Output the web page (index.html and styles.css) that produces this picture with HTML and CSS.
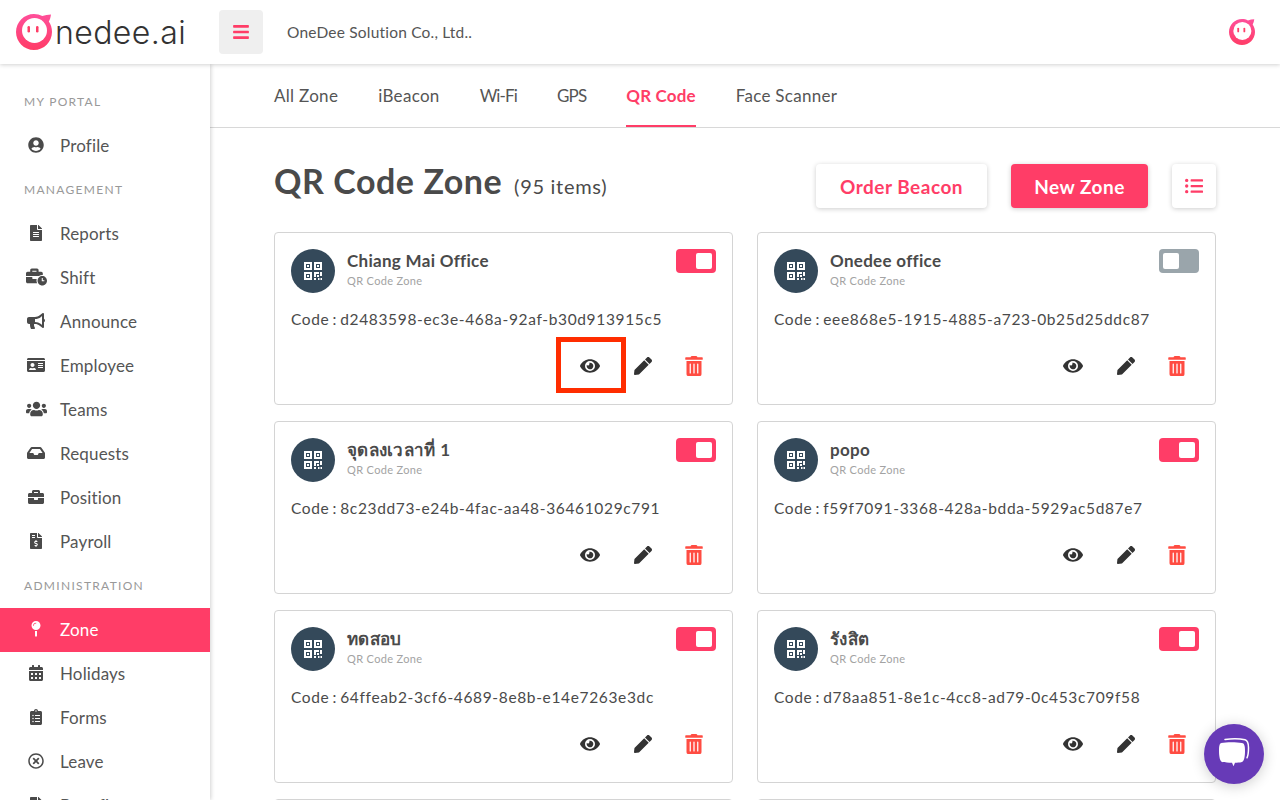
FILE: index.html
```html
<!DOCTYPE html>
<html lang="en">
<head>
    <meta charset="UTF-8">
    <meta name="viewport" content="width=device-width, initial-scale=1.0">
    <title>QR Code Zone - Onedee</title>
    <link rel="stylesheet" href="styles.css">
</head>
<body>
    <svg class="sprite" xmlns="http://www.w3.org/2000/svg">
        <defs>
            <linearGradient id="logo-grad" x1="0" y1="0" x2="0" y2="1">
                <stop offset="0" stop-color="#ff4f9a"/>
                <stop offset="1" stop-color="#ff3d67"/>
            </linearGradient>
        </defs>
        <symbol id="i-bars" viewBox="0 0 448 512"><path d="M16 132h416c8.837 0 16-7.163 16-16V76c0-8.837-7.163-16-16-16H16C7.163 60 0 67.163 0 76v40c0 8.837 7.163 16 16 16zm0 160h416c8.837 0 16-7.163 16-16v-40c0-8.837-7.163-16-16-16H16c-8.837 0-16 7.163-16 16v40c0 8.837 7.163 16 16 16zm0 160h416c8.837 0 16-7.163 16-16v-40c0-8.837-7.163-16-16-16H16c-8.837 0-16 7.163-16 16v40c0 8.837 7.163 16 16 16z"/></symbol>
        <symbol id="i-eye" viewBox="0 0 576 512"><path d="M572.52 241.4C518.29 135.59 410.93 64 288 64S57.68 135.64 3.48 241.41a32.35 32.35 0 0 0 0 29.19C57.71 376.41 165.07 448 288 448s230.32-71.64 284.52-177.41a32.35 32.35 0 0 0 0-29.19zM288 400a144 144 0 1 1 144-144 143.93 143.93 0 0 1-144 144zm0-240a95.31 95.31 0 0 0-25.31 3.79 47.85 47.85 0 0 1-66.9 66.9A95.78 95.78 0 1 0 288 160z"/></symbol>
        <symbol id="i-pen" viewBox="0 0 512 512"><path d="M290.74 93.24l128.02 128.02-277.99 277.99-114.14 12.6C11.35 513.54-1.56 500.62.14 485.34l12.7-114.22 277.9-277.88zm207.2-19.06l-60.11-60.11c-18.75-18.75-49.16-18.75-67.91 0l-56.55 56.55 128.02 128.02 56.55-56.55c18.75-18.76 18.75-49.16 0-67.91z"/></symbol>
        <symbol id="i-trash" viewBox="0 0 448 512"><path d="M32 464a48 48 0 0 0 48 48h288a48 48 0 0 0 48-48V128H32zm272-256a16 16 0 0 1 32 0v224a16 16 0 0 1-32 0zm-96 0a16 16 0 0 1 32 0v224a16 16 0 0 1-32 0zm-96 0a16 16 0 0 1 32 0v224a16 16 0 0 1-32 0zM432 32H312l-9.4-18.7A24 24 0 0 0 281.1 0H166.8a23.72 23.72 0 0 0-21.4 13.3L136 32H16A16 16 0 0 0 0 48v32a16 16 0 0 0 16 16h416a16 16 0 0 0 16-16V48a16 16 0 0 0-16-16z"/></symbol>
        <symbol id="i-user" viewBox="0 0 496 512"><path d="M248 8C111 8 0 119 0 256s111 248 248 248 248-111 248-248S385 8 248 8zm0 96c48.6 0 88 39.4 88 88s-39.4 88-88 88-88-39.4-88-88 39.4-88 88-88zm0 344c-58.7 0-111.3-26.6-146.5-68.2 18.8-35.4 55.6-59.8 98.5-59.8 2.4 0 4.8.4 7.1 1.1 13 4.2 26.6 6.9 40.9 6.9 14.3 0 28-2.7 40.9-6.9 2.3-.7 4.7-1.1 7.1-1.1 42.9 0 79.7 24.4 98.5 59.8C359.3 421.4 306.7 448 248 448z"/></symbol>
        <symbol id="i-file" viewBox="0 0 384 512"><path d="M224 136V0H24C10.7 0 0 10.7 0 24v464c0 13.3 10.7 24 24 24h336c13.3 0 24-10.7 24-24V160H248c-13.2 0-24-10.8-24-24zm64 236c0 6.6-5.4 12-12 12H108c-6.6 0-12-5.4-12-12v-8c0-6.6 5.4-12 12-12h168c6.6 0 12 5.4 12 12v8zm0-64c0 6.6-5.4 12-12 12H108c-6.6 0-12-5.4-12-12v-8c0-6.6 5.4-12 12-12h168c6.6 0 12 5.4 12 12v8zm0-72v8c0 6.6-5.4 12-12 12H108c-6.6 0-12-5.4-12-12v-8c0-6.6 5.4-12 12-12h168c6.6 0 12 5.4 12 12zm96-114.1v6.1H256V0h6.1c6.4 0 12.5 2.5 17 7l97.9 98c4.5 4.5 7 10.6 7 16.9z"/></symbol>
        <symbol id="i-list" viewBox="0 0 512 512"><path d="M48 48a48 48 0 1 0 48 48 48 48 0 0 0-48-48zm0 160a48 48 0 1 0 48 48 48 48 0 0 0-48-48zm0 160a48 48 0 1 0 48 48 48 48 0 0 0-48-48zm448 16H176a16 16 0 0 0-16 16v32a16 16 0 0 0 16 16h320a16 16 0 0 0 16-16v-32a16 16 0 0 0-16-16zm0-320H176a16 16 0 0 0-16 16v32a16 16 0 0 0 16 16h320a16 16 0 0 0 16-16V80a16 16 0 0 0-16-16zm0 160H176a16 16 0 0 0-16 16v32a16 16 0 0 0 16 16h320a16 16 0 0 0 16-16v-32a16 16 0 0 0-16-16z"/></symbol>
        <symbol id="i-time" viewBox="0 0 640 512"><path d="M496 224c-79.59 0-144 64.41-144 144s64.41 144 144 144 144-64.41 144-144-64.41-144-144-144zm64 150.29c0 5.34-4.37 9.71-9.71 9.71h-60.57c-5.34 0-9.71-4.37-9.71-9.71v-76.57c0-5.34 4.37-9.71 9.71-9.71h12.57c5.34 0 9.71 4.37 9.71 9.71V352h38.29c5.34 0 9.71 4.37 9.71 9.71v12.58zM496 192c5.4 0 10.72.33 16 .81V144c0-25.6-22.4-48-48-48h-80V48c0-25.6-22.4-48-48-48H176c-25.6 0-48 22.4-48 48v48H48c-25.6 0-48 22.4-48 48v80h395.12c28.6-20.09 63.35-32 100.88-32zM320 96H192V64h128v32zm6.82 224H208c-8.84 0-16-7.16-16-16v-48H0v144c0 25.6 22.4 48 48 48h291.43C327.1 423.96 320 396.82 320 368c0-16.66 2.48-32.72 6.82-48z"/></symbol>
        <symbol id="i-horn" viewBox="0 0 576 512"><path d="M576 240c0-23.63-12.95-44.04-32-55.12V32.01C544 23.26 537.02 0 512 0c-7.12 0-14.19 2.38-19.98 7.02l-85.03 68.03C364.28 109.19 310.66 128 256 128H64c-35.35 0-64 28.65-64 64v96c0 35.35 28.65 64 64 64h33.7c-1.39 10.48-2.18 21.14-2.18 32 0 39.77 9.26 77.35 25.56 110.94 5.19 10.69 16.52 17.06 28.4 17.06h74.28c26.05 0 41.69-29.84 25.9-50.56-16.4-21.52-26.15-48.36-26.15-77.44 0-11.11 1.62-21.79 4.41-32H256c54.66 0 108.28 18.81 150.98 52.95l85.03 68.03a32.023 32.023 0 0 0 19.98 7.02c24.92 0 32-22.78 32-32V295.13C563.05 284.04 576 263.63 576 240zm-96 141.42l-33.05-26.44C392.95 311.78 325.12 288 256 288v-96c69.12 0 136.95-23.78 190.95-66.98L480 98.58v282.84z"/></symbol>
        <symbol id="i-card" viewBox="0 0 576 512"><path d="M528 32H48C21.5 32 0 53.5 0 80v16h576V80c0-26.5-21.5-48-48-48zM0 432c0 26.5 21.5 48 48 48h480c26.5 0 48-21.5 48-48V128H0v304zm352-232c0-4.4 3.6-8 8-8h144c4.4 0 8 3.6 8 8v16c0 4.4-3.6 8-8 8H360c-4.4 0-8-3.6-8-8v-16zm0 64c0-4.4 3.6-8 8-8h144c4.4 0 8 3.6 8 8v16c0 4.4-3.6 8-8 8H360c-4.4 0-8-3.6-8-8v-16zm0 64c0-4.4 3.6-8 8-8h144c4.4 0 8 3.6 8 8v16c0 4.4-3.6 8-8 8H360c-4.4 0-8-3.6-8-8v-16zM176 192c35.3 0 64 28.7 64 64s-28.7 64-64 64-64-28.7-64-64 28.7-64 64-64zM67.1 396.2C75.5 370.5 99.6 352 128 352h8.2c12.3 5.1 25.7 8 39.8 8s27.6-2.9 39.8-8h8.2c28.4 0 52.5 18.5 60.9 44.2 3.2 9.9-5.2 19.8-15.6 19.8H82.7c-10.4 0-18.8-10-15.6-19.8z"/></symbol>
        <symbol id="i-users" viewBox="0 0 640 512"><path d="M96 224c35.3 0 64-28.7 64-64s-28.7-64-64-64-64 28.7-64 64 28.7 64 64 64zm448 0c35.3 0 64-28.7 64-64s-28.7-64-64-64-64 28.7-64 64 28.7 64 64 64zm32 32h-64c-17.6 0-33.5 7.1-45.1 18.6 40.3 22.1 68.9 62 75.1 109.4h66c17.7 0 32-14.3 32-32v-32c0-35.3-28.7-64-64-64zm-256 0c61.9 0 112-50.1 112-112S381.9 32 320 32 208 82.1 208 144s50.1 112 112 112zm76.8 32h-8.3c-20.8 10-43.9 16-68.5 16s-47.6-6-68.5-16h-8.3C179.6 288 128 339.6 128 403.2V432c0 26.5 21.5 48 48 48h288c26.5 0 48-21.5 48-48v-28.8c0-63.6-51.6-115.2-115.2-115.2zm-223.7-13.4C161.5 263.1 145.6 256 128 256H64c-35.3 0-64 28.7-64 64v32c0 17.7 14.3 32 32 32h65.9c6.3-47.4 34.9-87.3 75.2-109.4z"/></symbol>
        <symbol id="i-inbox" viewBox="0 0 576 512"><path d="M567.938 243.908L462.25 85.374A48.003 48.003 0 0 0 422.311 64H153.689a48 48 0 0 0-39.938 21.374L8.062 243.908A47.994 47.994 0 0 0 0 270.533V400c0 26.51 21.49 48 48 48h480c26.51 0 48-21.49 48-48V270.533a47.994 47.994 0 0 0-8.062-26.625zM162.252 128h251.497l85.333 128H376l-32 64H232l-32-64H76.918l85.334-128z"/></symbol>
        <symbol id="i-case" viewBox="0 0 512 512"><path d="M320 336c0 8.84-7.16 16-16 16h-96c-8.84 0-16-7.16-16-16v-48H0v144c0 25.6 22.4 48 48 48h416c25.6 0 48-22.4 48-48V288H320v48zm144-208h-80V80c0-25.6-22.4-48-48-48H176c-25.6 0-48 22.4-48 48v48H48c-25.6 0-48 22.4-48 48v80h512v-80c0-25.6-22.4-48-48-48zm-144 0H192V96h128v32z"/></symbol>
        <symbol id="i-pay" viewBox="0 0 384 512"><path d="M377 105L279.1 7c-4.5-4.5-10.6-7-17-7H256v128h128v-6.1c0-6.3-2.5-12.4-7-16.9zm-153 31V0H24C10.7 0 0 10.7 0 24v464c0 13.3 10.7 24 24 24h336c13.3 0 24-10.7 24-24V160H248c-13.2 0-24-10.8-24-24zM64 72c0-4.42 3.58-8 8-8h80c4.42 0 8 3.58 8 8v16c0 4.42-3.58 8-8 8H72c-4.42 0-8-3.58-8-8V72zm0 80v-16c0-4.42 3.58-8 8-8h80c4.42 0 8 3.58 8 8v16c0 4.42-3.58 8-8 8H72c-4.42 0-8-3.58-8-8zm144 263.88V440c0 4.42-3.58 8-8 8h-16c-4.42 0-8-3.58-8-8v-24.29c-11.29-.58-22.27-4.52-31.37-11.35-3.9-2.93-4.1-8.77-.57-12.14l11.75-11.21c2.77-2.64 6.89-2.76 10.13-.73 3.87 2.42 8.26 3.72 12.82 3.72h28.11c6.5 0 11.8-5.92 11.8-13.19 0-5.95-3.61-11.19-8.77-12.73l-45-13.5c-18.59-5.58-31.58-23.42-31.58-43.39 0-24.52 19.05-44.44 42.67-45.07V232c0-4.42 3.58-8 8-8h16c4.42 0 8 3.58 8 8v24.29c11.29.58 22.27 4.51 31.37 11.35 3.9 2.93 4.1 8.77.57 12.14l-11.75 11.21c-2.77 2.64-6.89 2.76-10.13.73-3.87-2.43-8.26-3.72-12.82-3.72h-28.11c-6.5 0-11.8 5.92-11.8 13.19 0 5.95 3.61 11.19 8.77 12.73l45 13.5c18.59 5.58 31.58 23.42 31.58 43.39 0 24.53-19.05 44.44-42.67 45.07z"/></symbol>
        <symbol id="i-pin" viewBox="0 0 288 512"><path d="M112 316.94v156.69l22.02 33.02c4.75 7.12 15.22 7.12 19.97 0L176 473.63V316.94c-10.39 1.92-21.06 3.06-32 3.06s-21.61-1.14-32-3.06zM144 0C64.47 0 0 64.47 0 144s64.47 144 144 144 144-64.47 144-144S223.53 0 144 0zm0 76c-37.5 0-68 30.5-68 68 0 6.62-5.38 12-12 12s-12-5.38-12-12c0-50.73 41.28-92 92-92 6.62 0 12 5.38 12 12s-5.38 12-12 12z"/></symbol>
        <symbol id="i-cal" viewBox="0 0 448 512"><path d="M0 464c0 26.5 21.5 48 48 48h352c26.5 0 48-21.5 48-48V192H0v272zm320-196c0-6.6 5.4-12 12-12h40c6.6 0 12 5.4 12 12v40c0 6.6-5.4 12-12 12h-40c-6.6 0-12-5.4-12-12v-40zm0 128c0-6.6 5.4-12 12-12h40c6.6 0 12 5.4 12 12v40c0 6.6-5.4 12-12 12h-40c-6.6 0-12-5.4-12-12v-40zM192 268c0-6.6 5.4-12 12-12h40c6.6 0 12 5.4 12 12v40c0 6.6-5.4 12-12 12h-40c-6.6 0-12-5.4-12-12v-40zm0 128c0-6.6 5.4-12 12-12h40c6.6 0 12 5.4 12 12v40c0 6.6-5.4 12-12 12h-40c-6.6 0-12-5.4-12-12v-40zM64 268c0-6.6 5.4-12 12-12h40c6.6 0 12 5.4 12 12v40c0 6.6-5.4 12-12 12H76c-6.6 0-12-5.4-12-12v-40zm0 128c0-6.6 5.4-12 12-12h40c6.6 0 12 5.4 12 12v40c0 6.6-5.4 12-12 12H76c-6.6 0-12-5.4-12-12v-40zM400 64h-48V16c0-8.8-7.2-16-16-16h-32c-8.8 0-16 7.2-16 16v48H160V16c0-8.8-7.2-16-16-16h-32c-8.8 0-16 7.2-16 16v48H48C21.5 64 0 85.5 0 112v48h448v-48c0-26.5-21.5-48-48-48z"/></symbol>
        <symbol id="i-clip" viewBox="0 0 384 512"><path d="M336 64h-80c0-35.3-28.7-64-64-64s-64 28.7-64 64H48C21.5 64 0 85.5 0 112v352c0 26.5 21.5 48 48 48h288c26.5 0 48-21.5 48-48V112c0-26.5-21.5-48-48-48zM96 424c-13.3 0-24-10.7-24-24s10.7-24 24-24 24 10.7 24 24-10.7 24-24 24zm0-96c-13.3 0-24-10.7-24-24s10.7-24 24-24 24 10.7 24 24-10.7 24-24 24zm0-96c-13.3 0-24-10.7-24-24s10.7-24 24-24 24 10.7 24 24-10.7 24-24 24zm96-192c13.3 0 24 10.7 24 24s-10.7 24-24 24-24-10.7-24-24 10.7-24 24-24zm128 368c0 4.4-3.6 8-8 8H168c-4.4 0-8-3.6-8-8v-16c0-4.4 3.6-8 8-8h144c4.4 0 8 3.6 8 8v16zm0-96c0 4.4-3.6 8-8 8H168c-4.4 0-8-3.6-8-8v-16c0-4.4 3.6-8 8-8h144c4.4 0 8 3.6 8 8v16zm0-96c0 4.4-3.6 8-8 8H168c-4.4 0-8-3.6-8-8v-16c0-4.4 3.6-8 8-8h144c4.4 0 8 3.6 8 8v16z"/></symbol>
        <symbol id="i-times" viewBox="0 0 512 512"><path d="M256 8C119 8 8 119 8 256s111 248 248 248 248-111 248-248S393 8 256 8zm0 448c-110.5 0-200-89.5-200-200S145.5 56 256 56s200 89.5 200 200-89.5 200-200 200zm101.8-262.2L295.6 256l62.2 62.2c4.7 4.7 4.7 12.3 0 17l-22.6 22.6c-4.7 4.7-12.3 4.7-17 0L256 295.6l-62.2 62.2c-4.7 4.7-12.3 4.7-17 0l-22.6-22.6c-4.7-4.7-4.7-12.3 0-17l62.2-62.2-62.2-62.2c-4.7-4.7-4.7-12.3 0-17l22.6-22.6c4.7-4.7 12.3-4.7 17 0l62.2 62.2 62.2-62.2c4.7-4.7 12.3-4.7 17 0l22.6 22.6c4.7 4.7 4.7 12.3 0 17z"/></symbol>
        <symbol id="i-qr" viewBox="0 0 20 20"><path fill-rule="evenodd" d="M1 1h8v8H1zM3 3v4h4V3zM11 1h8v8h-8zM13 3v4h4V3zM1 11h8v8H1zM3 13v4h4v-4z"/><path d="M4 4h2v2H4zM14 4h2v2h-2zM4 14h2v2H4zM11 11h5v2h-3v3h-2zM17 11h2v4h-2zM14 14h2v2h-2zM11 17h2v2h-2zM15 17h1.500v2H15zM17.500 17H19v2h-1.500z"/></symbol>
        <symbol id="i-logo" viewBox="0 0 36 36"><path d="M18 0c3 0 5.800.7 8.300 2C29 1.200 32 .6 35 .5c-.3 2.500-1 5-2.200 7C34.800 10.400 36 14 36 18c0 9.900-8.100 18-18 18S0 27.900 0 18 8.100 0 18 0z" fill="url(#logo-grad)"/><circle cx="18.500" cy="16.500" r="12.500" fill="#fff"/><rect x="11.500" y="12" width="2.500" height="6.500" rx="1.250" fill="#ff3d67"/><rect x="20" y="12" width="2.500" height="6.500" rx="1.250" fill="#ff3d67"/></symbol>
    </svg>

    <header class="topbar">
        <a class="logo" href="#">
            <svg class="logo-mark"><use href="#i-logo"/></svg>
            <span class="logo-text">nedee.ai</span>
        </a>
        <button class="menu-btn" type="button"><svg class="icon"><use href="#i-bars"/></svg></button>
        <span class="company">OneDee Solution Co., Ltd..</span>
        <svg class="avatar"><use href="#i-logo"/></svg>
    </header>

    <div class="layout">
        <nav class="sidebar">
            <p class="nav-label">MY PORTAL</p>
            <a class="nav-item" href="#"><span class="nav-icon"><svg class="ic-16"><use href="#i-user"/></svg></span>Profile</a>
            <p class="nav-label">MANAGEMENT</p>
            <a class="nav-item" href="#"><span class="nav-icon"><svg class="ic-16"><use href="#i-file"/></svg></span>Reports</a>
            <a class="nav-item" href="#"><span class="nav-icon"><svg class="ic-20"><use href="#i-time"/></svg></span>Shift</a>
            <a class="nav-item" href="#"><span class="nav-icon"><svg class="ic-18"><use href="#i-horn"/></svg></span>Announce</a>
            <a class="nav-item" href="#"><span class="nav-icon"><svg class="ic-18"><use href="#i-card"/></svg></span>Employee</a>
            <a class="nav-item" href="#"><span class="nav-icon"><svg class="ic-20"><use href="#i-users"/></svg></span>Teams</a>
            <a class="nav-item" href="#"><span class="nav-icon"><svg class="ic-18"><use href="#i-inbox"/></svg></span>Requests</a>
            <a class="nav-item" href="#"><span class="nav-icon"><svg class="ic-16"><use href="#i-case"/></svg></span>Position</a>
            <a class="nav-item" href="#"><span class="nav-icon"><svg class="ic-16"><use href="#i-pay"/></svg></span>Payroll</a>
            <p class="nav-label">ADMINISTRATION</p>
            <a class="nav-item active" href="#"><span class="nav-icon"><svg class="ic-16"><use href="#i-pin"/></svg></span>Zone</a>
            <a class="nav-item" href="#"><span class="nav-icon"><svg class="ic-16"><use href="#i-cal"/></svg></span>Holidays</a>
            <a class="nav-item" href="#"><span class="nav-icon"><svg class="ic-16"><use href="#i-clip"/></svg></span>Forms</a>
            <a class="nav-item" href="#"><span class="nav-icon"><svg class="ic-16"><use href="#i-times"/></svg></span>Leave</a>
            <a class="nav-item" href="#"><span class="nav-icon"><svg class="ic-16"><use href="#i-file"/></svg></span>Benefits</a>
        </nav>

        <main class="content">
            <div class="tabs">
                <a class="tab" href="#">All Zone</a>
                <a class="tab" href="#">iBeacon</a>
                <a class="tab tab-tight" href="#">Wi-Fi</a>
                <a class="tab tab-tight" href="#">GPS</a>
                <a class="tab active" href="#">QR Code</a>
                <a class="tab" href="#">Face Scanner</a>
            </div>

            <section class="page">
                <div class="page-head">
                    <h1>QR Code Zone <small>(95 items)</small></h1>
                    <div class="page-actions">
                        <button class="btn btn-white" type="button">Order Beacon</button>
                        <button class="btn btn-pink" type="button">New Zone</button>
                        <button class="btn-square" type="button"><svg class="icon"><use href="#i-list"/></svg></button>
                    </div>
                </div>

                <div class="zone-grid">
                    <article class="zone-card">
                        <div class="zone-top">
                            <span class="zone-badge"><svg><use href="#i-qr"/></svg></span>
                            <div class="zone-name"><h3>Chiang Mai Office</h3><p>QR Code Zone</p></div>
                            <span class="switch on"></span>
                        </div>
                        <p class="zone-code">Code : d2483598-ec3e-468a-92af-b30d913915c5</p>
                        <div class="zone-actions">
                            <svg class="act-eye"><use href="#i-eye"/></svg>
                            <svg class="act-pen"><use href="#i-pen"/></svg>
                            <svg class="act-trash"><use href="#i-trash"/></svg>
                        </div>
                        <span class="callout"></span>
                    </article>
                    <article class="zone-card">
                        <div class="zone-top">
                            <span class="zone-badge"><svg><use href="#i-qr"/></svg></span>
                            <div class="zone-name"><h3>Onedee office</h3><p>QR Code Zone</p></div>
                            <span class="switch"></span>
                        </div>
                        <p class="zone-code">Code : eee868e5-1915-4885-a723-0b25d25ddc87</p>
                        <div class="zone-actions">
                            <svg class="act-eye"><use href="#i-eye"/></svg>
                            <svg class="act-pen"><use href="#i-pen"/></svg>
                            <svg class="act-trash"><use href="#i-trash"/></svg>
                        </div>
                    </article>
                    <article class="zone-card">
                        <div class="zone-top">
                            <span class="zone-badge"><svg><use href="#i-qr"/></svg></span>
                            <div class="zone-name"><h3>จุดลงเวลาที่ 1</h3><p>QR Code Zone</p></div>
                            <span class="switch on"></span>
                        </div>
                        <p class="zone-code">Code : 8c23dd73-e24b-4fac-aa48-36461029c791</p>
                        <div class="zone-actions">
                            <svg class="act-eye"><use href="#i-eye"/></svg>
                            <svg class="act-pen"><use href="#i-pen"/></svg>
                            <svg class="act-trash"><use href="#i-trash"/></svg>
                        </div>
                    </article>
                    <article class="zone-card">
                        <div class="zone-top">
                            <span class="zone-badge"><svg><use href="#i-qr"/></svg></span>
                            <div class="zone-name"><h3>popo</h3><p>QR Code Zone</p></div>
                            <span class="switch on"></span>
                        </div>
                        <p class="zone-code">Code : f59f7091-3368-428a-bdda-5929ac5d87e7</p>
                        <div class="zone-actions">
                            <svg class="act-eye"><use href="#i-eye"/></svg>
                            <svg class="act-pen"><use href="#i-pen"/></svg>
                            <svg class="act-trash"><use href="#i-trash"/></svg>
                        </div>
                    </article>
                    <article class="zone-card">
                        <div class="zone-top">
                            <span class="zone-badge"><svg><use href="#i-qr"/></svg></span>
                            <div class="zone-name"><h3>ทดสอบ</h3><p>QR Code Zone</p></div>
                            <span class="switch on"></span>
                        </div>
                        <p class="zone-code">Code : 64ffeab2-3cf6-4689-8e8b-e14e7263e3dc</p>
                        <div class="zone-actions">
                            <svg class="act-eye"><use href="#i-eye"/></svg>
                            <svg class="act-pen"><use href="#i-pen"/></svg>
                            <svg class="act-trash"><use href="#i-trash"/></svg>
                        </div>
                    </article>
                    <article class="zone-card">
                        <div class="zone-top">
                            <span class="zone-badge"><svg><use href="#i-qr"/></svg></span>
                            <div class="zone-name"><h3>รังสิต</h3><p>QR Code Zone</p></div>
                            <span class="switch on"></span>
                        </div>
                        <p class="zone-code">Code : d78aa851-8e1c-4cc8-ad79-0c453c709f58</p>
                        <div class="zone-actions">
                            <svg class="act-eye"><use href="#i-eye"/></svg>
                            <svg class="act-pen"><use href="#i-pen"/></svg>
                            <svg class="act-trash"><use href="#i-trash"/></svg>
                        </div>
                    </article>
                    <article class="zone-card"></article>
                    <article class="zone-card"></article>
                </div>
            </section>
        </main>
    </div>

    <button class="chat-btn" type="button">
        <svg viewBox="0 0 36 36" width="36" height="36">
            <path d="M9 3.500c6-.8 15-.8 20 .3 2.500.7 3.500 3 3.500 8 0 5-.5 8-1.500 10" fill="none" stroke="#fff" stroke-width="1.500" stroke-linecap="round"/>
            <path d="M5 7c6-1 15-1 21 0 2 .4 3 2 3 8 0 6-1 10-3 11-2.500.6-5 .8-7 .8l-1.500 3.500-1.500-3.500c-3.500 0-7-.2-10-.8-2-1-3-5-3-11 0-6 .8-7.600 2.500-8z" fill="#fff"/>
        </svg>
    </button>
</body>
</html>
```

FILE: styles.css
```css
/* Reset */
* {
    margin: 0;
    padding: 0;
    box-sizing: border-box;
}

body {
    height: 800px;
    overflow: hidden;
    font-family: 'Lato', 'Noto Sans', 'DejaVu Sans', sans-serif;
    color: #4a4a4a;
    background: #fff;
}

a {
    color: inherit;
    text-decoration: none;
}

button {
    border: none;
    font-family: inherit;
    cursor: pointer;
}

/* width 0 instead of display none, the gradient has to stay usable */
.sprite {
    position: absolute;
    width: 0;
    height: 0;
}

/* Top bar */
.topbar {
    position: relative;
    z-index: 3;
    display: flex;
    align-items: center;
    height: 64px;
    padding-right: 25px;
    background: #fff;
    box-shadow: 0 1px 4px rgba(0, 0, 0, 0.18);
}

.logo {
    display: flex;
    align-items: center;
    width: 219px;
    padding-left: 16px;
}

.logo-mark {
    flex: none;
    width: 36px;
    height: 36px;
}

.logo-text {
    margin-left: 3px;
    font-family: 'Inter', sans-serif;
    font-size: 32px;
    font-weight: 300;
    letter-spacing: 0.4px;
    color: #333;
}

.menu-btn {
    display: flex;
    align-items: center;
    justify-content: center;
    width: 44px;
    height: 44px;
    background: #efefef;
    border-radius: 4px;
}

.icon {
    width: 16px;
    height: 18px;
    fill: #ff3d67;
}

.company {
    margin-left: 24px;
    font-size: 15.5px;
    letter-spacing: 0.2px;
    color: #555;
}

.avatar {
    width: 26px;
    height: 26px;
    margin-left: auto;
}

/* Layout */
.layout {
    display: flex;
    height: 736px;
}

.sidebar {
    position: relative;
    z-index: 2;
    flex: 0 0 210px;
    padding-top: 16px;
    overflow: hidden;
    box-shadow: 1px 0 4px rgba(0, 0, 0, 0.18);
}

.nav-label {
    height: 44px;
    padding-left: 24px;
    font-size: 12px;
    line-height: 44px;
    letter-spacing: 1.3px;
    color: #999;
}

.nav-item {
    display: flex;
    align-items: center;
    height: 44px;
    padding-bottom: 2px;
    font-size: 17px;
    letter-spacing: 0.15px;
    color: #555;
}

.nav-item.active {
    background: #ff3d67;
    color: #fff;
}

.nav-icon {
    display: flex;
    align-items: center;
    justify-content: center;
    width: 36px;
    margin: 0 6px 0 18px;
    fill: #4a4a4a;
}

.nav-item.active .nav-icon {
    fill: #fff;
}

.ic-16 {
    width: 16px;
    height: 16px;
}

.ic-18 {
    width: 18px;
    height: 18px;
}

.ic-20 {
    width: 21px;
    height: 18px;
}

/* Tabs */
.content {
    flex: 1;
    min-width: 0;
}

.tabs {
    display: flex;
    gap: 40px;
    height: 64px;
    padding-left: 64px;
    border-bottom: 1px solid #d8d8d8;
}

.tab {
    padding-top: 21px;
    font-size: 17px;
    letter-spacing: 0.3px;
    color: #555;
}

.tab-tight {
    letter-spacing: -0.85px;
}

.tab.active {
    font-weight: 700;
    letter-spacing: 0.15px;
    color: #ff3d67;
    border-bottom: 2px solid #ff3d67;
}

/* Page */
.page {
    padding: 36px 64px 0;
}

.page-head {
    display: flex;
    align-items: center;
    justify-content: space-between;
    height: 44px;
    margin-bottom: 24px;
}

h1 {
    padding-bottom: 12px;
    font-size: 34px;
    font-weight: 700;
    letter-spacing: 0.55px;
    color: #4a4a4a;
}

h1 small {
    margin-left: 3px;
    font-size: 20px;
    font-weight: 400;
    letter-spacing: 0.7px;
}

.page-actions {
    display: flex;
    gap: 24px;
}

.btn {
    height: 44px;
    border-radius: 4px;
    font-size: 19px;
    font-weight: 700;
    letter-spacing: 0.5px;
    box-shadow: 0 1px 5px rgba(0, 0, 0, 0.2);
}

.btn-white {
    width: 171px;
    background: #fff;
    color: #ff3d67;
}

.btn-pink {
    width: 137px;
    background: #ff3d67;
    color: #fff;
}

.btn-square {
    display: flex;
    align-items: center;
    justify-content: center;
    width: 44px;
    height: 44px;
    background: #fff;
    border-radius: 4px;
    box-shadow: 0 1px 5px rgba(0, 0, 0, 0.2);
}

.btn-square .icon {
    width: 18px;
    height: 18px;
}

/* Zone cards */
.zone-grid {
    display: grid;
    grid-template-columns: 459px 459px;
    grid-auto-rows: 173px;
    gap: 16px 24px;
}

.zone-card {
    position: relative;
    padding: 16px;
    border: 1px solid #d4d4d4;
    border-radius: 4px;
}

.zone-top {
    display: flex;
    gap: 12px;
}

.zone-badge {
    display: flex;
    align-items: center;
    justify-content: center;
    width: 44px;
    height: 44px;
    border-radius: 50%;
    background: #34495a;
    fill: #fff;
}

.zone-badge svg {
    width: 20px;
    height: 20px;
}

.zone-name {
    flex: 1;
}

.zone-name h3 {
    font-size: 17px;
    font-weight: 700;
    line-height: 23px;
    letter-spacing: 0.3px;
    color: #4a4a4a;
}

.zone-name p {
    margin-top: 1px;
    font-size: 11px;
    line-height: 16px;
    letter-spacing: 0.35px;
    color: #a3a3a3;
}

.switch {
    position: relative;
    width: 40px;
    height: 24px;
    border-radius: 4px;
    background: #9aa5ab;
}

/* white knob of the toggle */
.switch::after {
    content: "";
    position: absolute;
    top: 4px;
    left: 4px;
    width: 16px;
    height: 16px;
    border-radius: 2px;
    background: #fff;
}

.switch.on {
    background: #ff3d67;
}

.switch.on::after {
    left: 20px;
}

.zone-code {
    margin-top: 15px;
    font-size: 15.5px;
    line-height: 22px;
    letter-spacing: 0.65px;
    word-spacing: -1.5px;
    color: #4a4a4a;
}

.zone-actions {
    display: flex;
    align-items: center;
    justify-content: flex-end;
    gap: 32px;
    height: 24px;
    margin-top: 24px;
    padding-right: 13px;
}

.act-eye {
    width: 20px;
    height: 18px;
    fill: #333;
}

.act-pen {
    width: 18px;
    height: 18px;
    margin: 0 1px 0 2px;
    fill: #333;
}

.act-trash {
    width: 18px;
    height: 20px;
    fill: #ff4c42;
}

/* Red annotation box around the view icon */
.callout {
    position: absolute;
    top: 104px;
    left: 281px;
    width: 70px;
    height: 56px;
    border: 5px solid #ff2d00;
}

/* Chat bubble */
.chat-btn {
    position: fixed;
    right: 16px;
    bottom: 16px;
    z-index: 5;
    display: flex;
    align-items: center;
    justify-content: center;
    width: 60px;
    height: 60px;
    border-radius: 50%;
    background: #673ab7;
    box-shadow: 0 2px 14px rgba(0, 0, 0, 0.2);
}
```
